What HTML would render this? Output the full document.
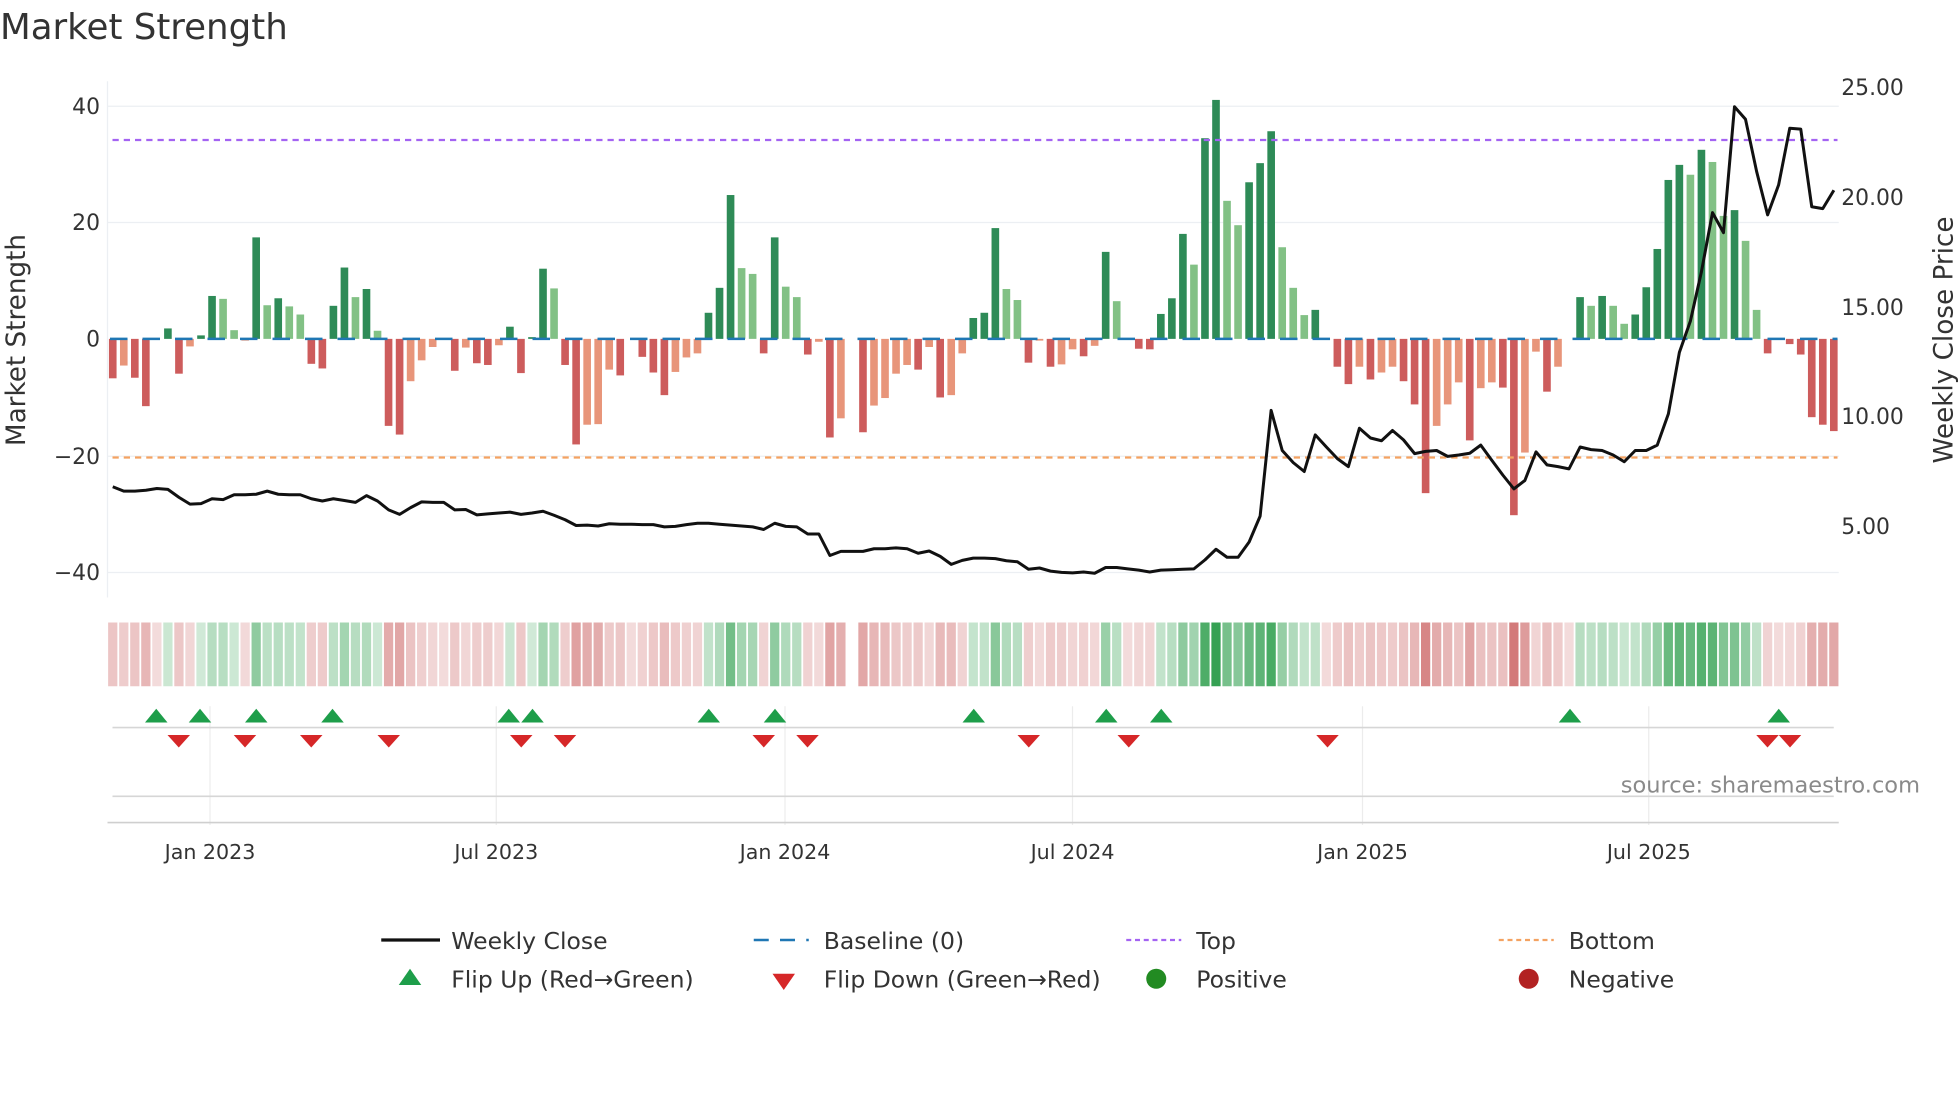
<!DOCTYPE html>
<html><head><meta charset="utf-8">
<style>
html,body{margin:0;padding:0;background:#fff;width:1960px;height:1102px;overflow:hidden}
svg{display:block}
text{font-family:"DejaVu Sans","Liberation Sans",sans-serif;fill:#333}
</style></head>
<body>
<svg id="s" width="1960" height="1102" viewBox="0 0 1568 881.6" preserveAspectRatio="none" xmlns="http://www.w3.org/2000/svg">
<text x="0" y="31" font-size="28.5" fill="#333">Market Strength</text>
<!-- grid -->
<g stroke="#eceff3" stroke-width="1">
<line x1="86" y1="85" x2="1471" y2="85"/><line x1="86" y1="178" x2="1471" y2="178"/>
<line x1="86" y1="365" x2="1471" y2="365"/><line x1="86" y1="458" x2="1471" y2="458"/>
<line x1="86" y1="65" x2="86" y2="478"/>
</g>
<g font-size="17.5" text-anchor="end">
<text x="80" y="91">40</text><text x="80" y="184">20</text><text x="80" y="277">0</text>
<text x="80" y="371">−20</text><text x="80" y="464">−40</text>
</g>
<g font-size="17.5">
<text x="1473" y="76">25.00</text><text x="1473" y="164">20.00</text><text x="1473" y="252">15.00</text>
<text x="1473" y="339">10.00</text><text x="1473" y="427">5.00</text>
</g>
<text transform="translate(20,272) rotate(-90)" font-size="21" text-anchor="middle">Market Strength</text>
<text transform="translate(1562,272) rotate(-90)" font-size="21" text-anchor="middle">Weekly Close Price</text>
<g id="bars"></g>
<line x1="88" y1="271.1" x2="1470" y2="271.1" stroke="#1f77b4" stroke-width="2" stroke-dasharray="14,12"/>
<line x1="90" y1="112" x2="1470" y2="112" stroke="#a463f2" stroke-width="1.8" stroke-dasharray="5,4"/>
<line x1="90" y1="366" x2="1470" y2="366" stroke="#f4a261" stroke-width="1.8" stroke-dasharray="5,4"/>
<polyline id="price" fill="none" stroke="#111" stroke-width="2.4" stroke-linejoin="round"/>
<g id="heat"></g>
<!-- flips panel -->
<g stroke="#ececec" stroke-width="1">
<line x1="168" y1="565" x2="168" y2="660"/><line x1="397" y1="565" x2="397" y2="660"/>
<line x1="628" y1="565" x2="628" y2="660"/><line x1="858" y1="565" x2="858" y2="660"/>
<line x1="1090" y1="565" x2="1090" y2="660"/><line x1="1319" y1="565" x2="1319" y2="660"/>
</g>
<line x1="90" y1="582" x2="1467" y2="582" stroke="#d6d6d6" stroke-width="1.3"/>
<line x1="90" y1="637" x2="1467" y2="637" stroke="#d6d6d6" stroke-width="1.3"/>
<line x1="86" y1="658" x2="1471" y2="658" stroke="#cfcfcf" stroke-width="1.3"/>
<g id="flips"></g>
<text x="1536" y="634" font-size="18" text-anchor="end" style="fill:#8a8a8a">source: sharemaestro.com</text>
<g font-size="16.5" text-anchor="middle">
<text x="168" y="687">Jan 2023</text><text x="397" y="687">Jul 2023</text><text x="628" y="687">Jan 2024</text>
<text x="858" y="687">Jul 2024</text><text x="1090" y="687">Jan 2025</text><text x="1319" y="687">Jul 2025</text>
</g>
<!-- legend -->
<g font-size="18.8">
<line x1="305" y1="752" x2="352" y2="752" stroke="#111" stroke-width="2.6"/>
<text x="361" y="759">Weekly Close</text>
<line x1="603" y1="752" x2="647" y2="752" stroke="#1f77b4" stroke-width="2" stroke-dasharray="12,9"/>
<text x="659" y="759">Baseline (0)</text>
<line x1="901" y1="752" x2="945" y2="752" stroke="#a463f2" stroke-width="1.8" stroke-dasharray="4,3"/>
<text x="957" y="759">Top</text>
<line x1="1199" y1="752" x2="1243" y2="752" stroke="#f4a261" stroke-width="1.8" stroke-dasharray="4,3"/>
<text x="1255" y="759">Bottom</text>
<polygon points="319,788 337,788 328,775" fill="#1e9e4a"/>
<text x="361" y="790">Flip Up (Red→Green)</text>
<polygon points="618,779 636,779 627,792" fill="#d62728"/>
<text x="659" y="790">Flip Down (Green→Red)</text>
<circle cx="925" cy="783" r="8" fill="#228b22"/>
<text x="957" y="790">Positive</text>
<circle cx="1223" cy="783" r="8" fill="#b22222"/>
<text x="1255" y="790">Negative</text>
</g>
</svg>
<script>
var V=[-6.8,-4.6,-6.7,-11.6,0,1.8,-6,-1.3,0.6,7.4,6.9,1.5,-0.3,17.5,5.8,7,5.6,4.2,-4.3,-5.1,5.7,12.3,7.2,8.6,1.4,-15,-16.5,-7.3,-3.7,-1.4,0,-5.5,-1.5,-4.2,-4.5,-1.1,2.1,-5.9,0.3,12.1,8.7,-4.5,
-18.2,-14.8,-14.7,-5.3,-6.3,0,-3.1,-5.8,-9.7,-5.7,-3.2,-2.5,4.5,8.8,24.8,12.2,11.2,-2.5,17.5,9,7.2,-2.7,-0.5,-17,-13.7,0,-16.1,-11.5,-10.2,-6,-4.5,-5.3,-1.4,-10.1,-9.7,-2.5,3.6,4.5,19.1,8.6,6.7,-4.1,-0.3,
-4.8,-4.4,-1.8,-3,-1.2,15,6.5,0,-1.7,-1.8,4.3,7,18.1,12.8,34.6,41.2,23.8,19.6,27,30.3,35.8,15.8,8.8,4.1,5,-0.1,-4.8,-7.8,-4.8,-7,-5.8,-4.8,-7.3,-11.3,-26.6,-15,-11.3,-7.5,-17.5,-8.5,-7.5,-8.4,-30.4,
-19.6,-2.2,-9.1,-4.8,0,7.2,5.7,7.4,5.7,2.6,4.2,8.9,15.5,27.4,30,28.3,32.6,30.5,21.2,22.2,16.9,5,-2.5,0,-0.9,-2.7,-13.5,-14.8,-15.9];
var L=["d","l","d","d","n","d","d","l","d","d","l","l","l","d","l","d","l","l","d","d","d","d","l","d","l","d","d","l","l","l","n","d","l","d","d","l","d","d","d","d","l","d",
"d","l","l","l","d","n","d","d","d","l","l","l","d","d","d","l","l","d","d","l","l","d","l","d","l","n","d","l","l","l","l","d","l","d","l","l","d","d","d","l","l","d","l",
"d","l","l","d","l","d","l","n","d","d","d","d","d","l","d","d","l","l","d","d","d","l","l","l","d","l","d","d","l","d","l","l","d","d","d","l","l","l","d","l","l","d","d",
"l","l","d","l","n","d","l","d","l","l","d","d","d","d","d","l","d","l","l","d","l","l","d","n","d","d","d","d","d"];
var P=[911,921,921,919,915,917,935,950,949,938,940,929,929,928,921,928,929,929,938,943,938,942,946,931,943,963,973,958,945,946,946,963,962,974,972,970,968,973,970,966,975,985,
998,997,999,994,995,995,996,996,1001,1000,996,993,993,995,997,999,1001,1007,993,1000,1001,1017,1017,1065,1056,1056,1056,1050,1050,1048,1050,1060,1055,1067,1085,1076,1071,1071,1072,1077,1079,1096,1093,
1100,1103,1104,1102,1105,1092,1092,1095,1098,1102,1098,1097,1096,1095,1075,1051,1069,1069,1035,977,740,830,857,877,795,822,848,866,780,802,808,785,806,837,832,830,843,840,836,818,852,885,
916,897,833,862,866,871,822,828,830,840,855,830,830,818,748,610,540,430,297,342,60,88,205,302,235,108,110,284,288,247];
var NS="http://www.w3.org/2000/svg";
function el(t,a,p){var e=document.createElementNS(NS,t);for(var k in a)e.setAttribute(k,a[k]);p.appendChild(e);return e;}
var x0=90.2,dx=8.826,z=271.1,u=4.64,bw=6.1;
var bars=document.getElementById('bars'),heat=document.getElementById('heat');
for(var i=0;i<V.length;i++){
 var v=V[i],cx=x0+dx*i,c;
 if(v>0)c=L[i]=="d"?"#2e8b57":"#82c185";else c=L[i]=="d"?"#cd5c5c":"#e8957a";
 if(v!=0){var h=Math.abs(v)*u;el('rect',{x:cx-bw/2,y:v>0?z-h:z,width:bw,height:h,fill:c},bars);}
 if(i==67)continue;
 var a,col;
 if(v>0){a=0.22+0.78*Math.min(1,v/42);col="rgba(50,160,80,"+a+")";}
 else{a=0.22+0.6*Math.min(1,-v/31);col="rgba(200,90,90,"+a+")";}
 el('rect',{x:cx-3.7,y:498,width:7.4,height:51,fill:col},heat);
}
var pts=[];for(var i=0;i<P.length;i++){pts.push((x0+dx*i).toFixed(1)+","+(64+P[i]/2.8).toFixed(1));}
document.getElementById('price').setAttribute('points',pts.join(' '));
var fl=document.getElementById('flips');
[125,160,205,266,407,426,567,620,779,885,929,1256,1423].forEach(function(x){el('polygon',{points:(x-9)+",578 "+(x+9)+",578 "+x+",567",fill:"#1e9e4a"},fl);});
[143,196,249,311,417,452,611,646,823,903,1062,1414,1432].forEach(function(x){el('polygon',{points:(x-9)+",588 "+(x+9)+",588 "+x+",598",fill:"#d62728"},fl);});
</script>
</body></html>
